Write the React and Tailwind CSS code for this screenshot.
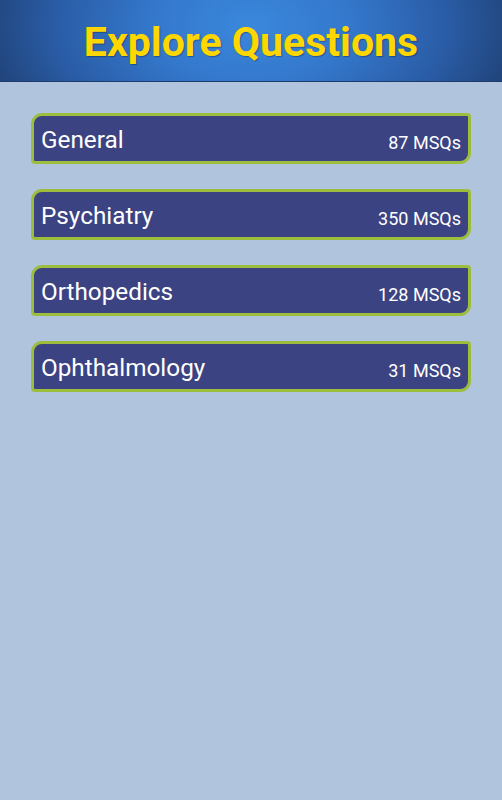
const topics = [
  { name: "General", count: 87 },
  { name: "Psychiatry", count: 350 },
  { name: "Orthopedics", count: 128 },
  { name: "Ophthalmology", count: 31 },
];

export default function App() {
  return (
    <div className="min-h-[800px] bg-[#b0c4de] font-['Roboto',sans-serif]">
      {/* Header */}
      <header className="h-[82px] flex items-center justify-center bg-[radial-gradient(ellipse_280px_170px_at_50%_30%,#3a88dc_0%,#3478cc_35%,#2a5ca6_70%,#1f4073_100%)] border-b border-[#1d3c6c]">
        <h1 className="text-[41px] font-bold text-[#ffd700] leading-none pt-[4px] [text-shadow:1px_1px_1px_rgba(0,0,0,0.3)]">
          Explore Questions
        </h1>
      </header>

      {/* Topic list */}
      <div className="flex flex-col gap-[25px] px-[31px] pt-[31px]">
        {topics.map((t) => (
          <div
            key={t.name}
            className="h-[51px] flex items-center justify-between border-[3px] border-[#9dbd3c] bg-[#3b4382] rounded-tl-[11px] rounded-br-[11px] rounded-tr-[4px] rounded-bl-[4px] pl-[7px] pr-[7px] text-white"
          >
            <span className="text-[24.3px] leading-none pt-[3px]">{t.name}</span>
            <span className="text-[18px] leading-none pt-[8px]">{t.count} MSQs</span>
          </div>
        ))}
      </div>
    </div>
  );
}
